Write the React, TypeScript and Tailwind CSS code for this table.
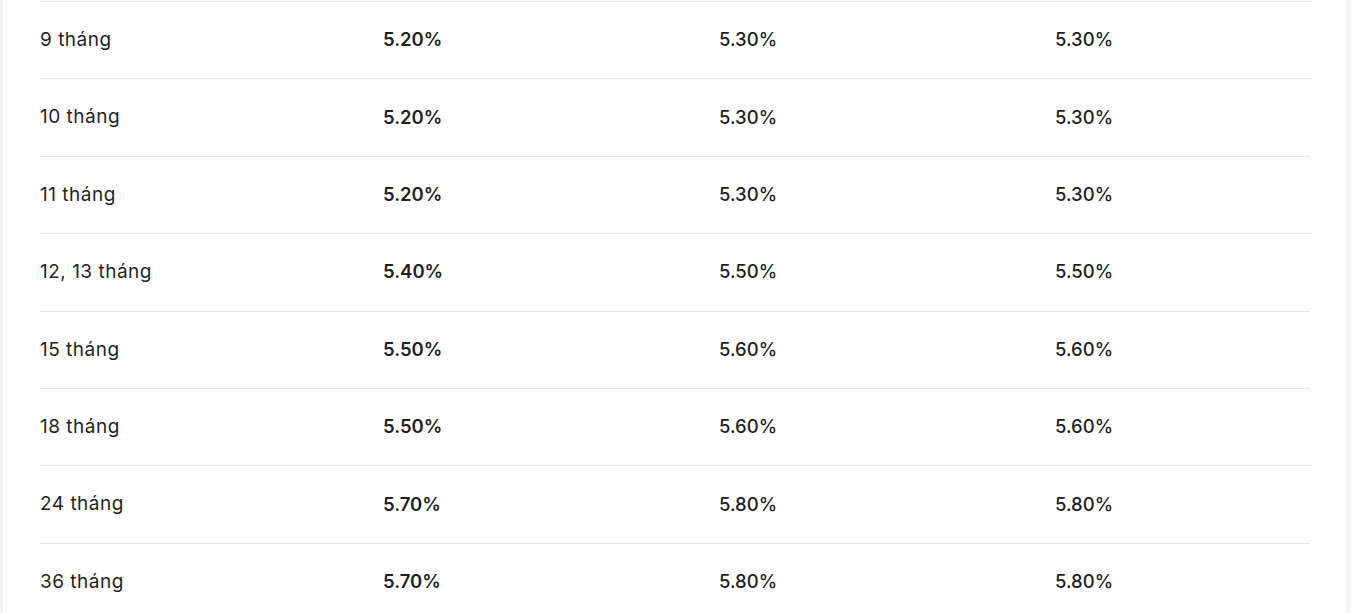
const rows = [
  ["9 tháng", "5.20%", "5.30%", "5.30%"],
  ["10 tháng", "5.20%", "5.30%", "5.30%"],
  ["11 tháng", "5.20%", "5.30%", "5.30%"],
  ["12, 13 tháng", "5.40%", "5.50%", "5.50%"],
  ["15 tháng", "5.50%", "5.60%", "5.60%"],
  ["18 tháng", "5.50%", "5.60%", "5.60%"],
  ["24 tháng", "5.70%", "5.80%", "5.80%"],
  ["36 tháng", "5.70%", "5.80%", "5.80%"],
];

export default function App() {
  return (
    <div
      className="flex h-[613px] overflow-hidden bg-[#f3f3f3] pl-[3px] pr-[5px]"
      style={{ fontFamily: "Inter, 'Noto Sans', sans-serif" }}
    >
      <div className="flex-1 bg-white pl-[37px] pr-[36px] pt-px">
        <div className="border-t border-[#e5e5e5]">
          {rows.map((r, i) => (
            <div
              key={i}
              className="grid h-[77.4px] grid-cols-[298px_45px_336px_336px_1fr] border-b border-[#e5e5e5] text-[18.5px] text-[#1f1f1f]"
            >
              <div className="flex items-center text-[19px] tracking-[0.5px]">{r[0]}</div>
              <div />
              <div className="flex items-center font-semibold">{r[1]}</div>
              <div className="flex items-center font-medium">{r[2]}</div>
              <div className="flex items-center font-medium">{r[3]}</div>
            </div>
          ))}
        </div>
      </div>
    </div>
  );
}
